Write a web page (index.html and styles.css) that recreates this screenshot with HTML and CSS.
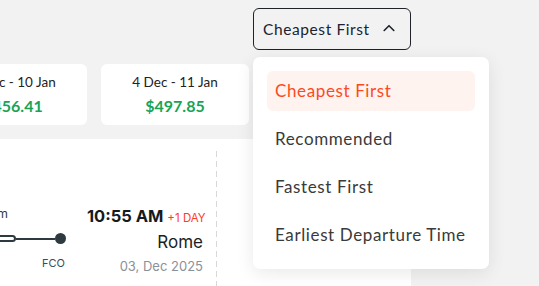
FILE: index.html
```html
<!DOCTYPE html>
<html lang="en">
<head>
<meta charset="utf-8">
<title>Flights</title>
<link rel="stylesheet" href="styles.css">
</head>
<body>
<div class="page">
  <div class="content">
    <div class="toolbar">
      <div class="sort">
        <button class="sort-btn" type="button">
          <span>Cheapest First</span>
          <svg class="chev" width="12" height="8" viewBox="0 0 12 8" aria-hidden="true"><path d="M1.2 6.5 L6 1.7 L10.8 6.5" fill="none" stroke="#1f2329" stroke-width="1.6" stroke-linecap="round" stroke-linejoin="round"/></svg>
        </button>
        <ul class="menu">
          <li class="item active">Cheapest First</li>
          <li class="item">Recommended</li>
          <li class="item">Fastest First</li>
          <li class="item">Earliest Departure Time</li>
        </ul>
      </div>
    </div>
    <div class="dates">
      <div class="date-card"><span class="range">3 Dec - 10 Jan</span><span class="price">$456.41</span></div>
      <div class="date-card"><span class="range">4 Dec - 11 Jan</span><span class="price">$497.85</span></div>
      <div class="date-card"><span class="range">5 Dec - 12 Jan</span><span class="price">$512.30</span></div>
    </div>
    <div class="result">
      <div class="flight">
        <div class="route">
          <div class="dur">2h 35m</div>
          <div class="track">
            <span class="line grow"></span>
            <span class="stop"></span>
            <span class="line"></span>
            <span class="dot"></span>
          </div>
          <div class="codes"><span>FCO</span></div>
        </div>
        <div class="arrive">
          <div class="time">10:55 AM <span class="plus">+1 DAY</span></div>
          <div class="city">Rome</div>
          <div class="day">03, Dec 2025</div>
        </div>
      </div>
      <div class="divider"></div>
      <div class="fare"></div>
    </div>
  </div>
</div>
</body>
</html>
```

FILE: styles.css
```css
* { box-sizing: border-box; }
html, body { margin: 0; padding: 0; }
body {
  background: #f2f2f2;
  font-family: Lato, "Open Sans", sans-serif;
  color: #2b2b2b;
  width: 539px;
  height: 286px;
  overflow: hidden;
}
.page { width: 539px; }
.content {
  width: 472px;
  margin-left: -61px;
  padding-top: 8px;
}
.toolbar {
  display: flex;
  justify-content: flex-end;
}
.sort { position: relative; }
.sort-btn {
  width: 158px;
  height: 42px;
  display: flex;
  align-items: center;
  justify-content: space-between;
  padding: 0 15px 0 9px;
  border: 1px solid #1f2329;
  border-radius: 6px;
  background: transparent;
  font-family: Lato, sans-serif;
  font-size: 15.5px;
  letter-spacing: 0.6px;
  color: #1c2230;
}
.chev { display: block; margin-top: -2px; }
.menu {
  position: absolute;
  top: 49px;
  left: 0;
  width: 236px;
  margin: 0;
  padding: 14px;
  list-style: none;
  background: #fff;
  border-radius: 7px;
  box-shadow: 0 4px 18px rgba(0, 0, 0, 0.09);
  display: flex;
  flex-direction: column;
  gap: 8px;
  z-index: 2;
}
.item {
  height: 40px;
  line-height: 40px;
  padding: 0 8px;
  border-radius: 6px;
  font-size: 17px;
  letter-spacing: 0.62px;
  color: #3a3a3a;
  white-space: nowrap;
}
.item.active { background: #fff3f0; color: #fb4a1e; }
.dates {
  margin-top: 14px;
  display: grid;
  grid-template-columns: repeat(3, 148px);
  gap: 14px;
}
.date-card {
  height: 61px;
  background: #fff;
  border-radius: 6px;
  display: flex;
  flex-direction: column;
  align-items: center;
  justify-content: center;
  gap: 5px;
}
.range { font-size: 13.5px; color: #222; line-height: 18px; }
.price { font-size: 16px; font-weight: 700; color: #17a457; line-height: 20px; }
.result {
  margin-top: 14px;
  height: 160px;
  background: #fff;
  border-radius: 6px 6px 0 0;
  display: flex;
}
.flight {
  width: 277px;
  display: flex;
  align-items: flex-start;
  padding: 66px 13px 0 0;
}
.route {
  width: 127px;
  flex: none;
  padding-top: 1px;
}
.dur {
  font-family: Inter, sans-serif;
  font-size: 12.5px;
  color: #2f3b48;
  text-align: right;
  padding-right: 58px;
  line-height: 16px;
}
.track {
  display: flex;
  align-items: center;
  height: 11px;
  margin-top: 11px;
}
.line { height: 2px; background: #2d3a40; width: 39px; }
.line.grow { flex: 1; }
.stop {
  width: 26px;
  height: 7px;
  border: 2px solid #2d3a40;
  border-radius: 4px;
  background: #fff;
}
.dot { width: 11px; height: 11px; border-radius: 50%; background: #2d3a40; }
.codes {
  text-align: right;
  padding-right: 1px;
  margin-top: 12px;
  font-family: Inter, sans-serif;
  font-size: 11px;
  color: #3e4a50;
  line-height: 14px;
}
.arrive {
  margin-left: 21px;
  flex: 1;
  min-width: 0;
  text-align: right;
  font-family: Inter, sans-serif;
}
.time { font-size: 16.5px; font-weight: 700; color: #161a1d; line-height: 22px; white-space: nowrap; }
.plus { font-size: 11.5px; font-weight: 400; color: #ff3b1f; }
.city { font-size: 17px; color: #1b1f22; line-height: 26px; }
.day { font-size: 13px; color: #8b9196; line-height: 22px; }
.divider {
  width: 1px;
  margin-top: 12px;
  background: repeating-linear-gradient(to bottom, #d8d8d8 0 6px, transparent 6px 10px);
}
.fare { flex: 1; }
```
